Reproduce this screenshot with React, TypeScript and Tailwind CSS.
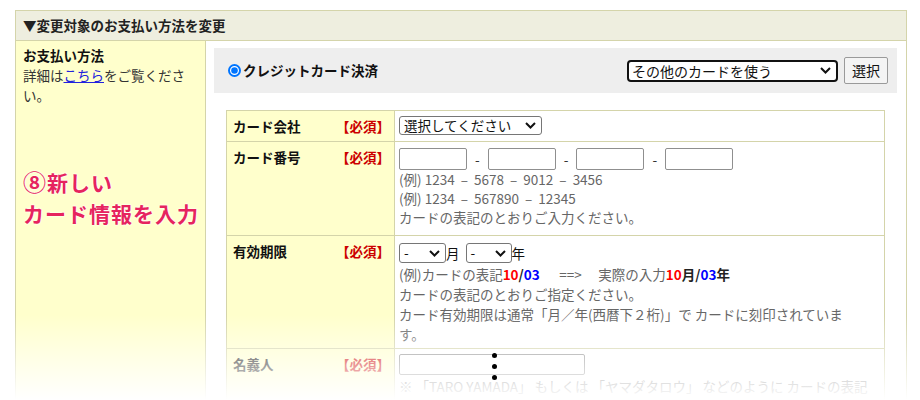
import type { ReactNode } from 'react'

const border = 'border-[#d4d4aa]'

function Chevron() {
  return (
    <svg width="11" height="7" viewBox="0 0 11 7" className="shrink-0">
      <path d="M1 1l4.5 4.5L10 1" fill="none" stroke="#111" strokeWidth="2" />
    </svg>
  )
}

function FakeSelect({ label, className }: { label: string; className: string }) {
  return (
    <div
      className={`flex items-center justify-between border border-[#767676] rounded-[3px] bg-white pl-[4px] pr-[5px] text-[13.5px] text-[#111] ${className}`}
    >
      <span className="leading-none">{label}</span>
      <Chevron />
    </div>
  )
}

function Input({ className }: { className: string }) {
  return <div className={`border border-[#8f8f8f] rounded-[2px] bg-white ${className}`} />
}

function Row({ label, first, children }: { label: string; first?: boolean; children: ReactNode }) {
  return (
    <div className={`flex ${first ? '' : `border-t ${border}`}`}>
      <div className={`w-[168px] shrink-0 bg-[#ffffcc] border-r ${border} pl-[6px] pr-[4px] pt-[5px] flex justify-between leading-[20px] font-bold`}>
        <span className="text-[#111]">{label}</span>
        <span className="text-[#cc0000]">【必須】</span>
      </div>
      <div className="flex-1 bg-white pl-[4px] pr-[4px]">{children}</div>
    </div>
  )
}

const dash = '\u00a0\u00a0–\u00a0\u00a0'

export default function App() {
  return (
    <div className="relative w-[920px] h-[400px] overflow-hidden bg-white font-['Noto_Sans_CJK_JP','Noto_Sans',sans-serif] text-[13.5px] text-[#222]">
      <div className={`ml-[15px] mt-[10px] w-[892px] border ${border}`}>
        {/* 見出し */}
        <div className={`h-[30px] flex items-center pl-[7px] font-bold bg-[#eeeedf] border-b ${border}`}>
          ▼変更対象のお支払い方法を変更
        </div>

        <div className="flex">
          {/* 左列 */}
          <div className={`w-[190px] shrink-0 bg-[#ffffcc] border-r ${border} pl-[7px] pr-[6px] pt-[4px] leading-[20px]`}>
            <div className="font-bold text-[#111]">お支払い方法</div>
            <div className="text-[#333]">
              詳細は<span className="text-[#2222dd] underline">こちら</span>をご覧ください。
            </div>
            <div className="mt-[61px] text-[21px] leading-[31px] tracking-[1px] font-bold text-[#e6245e] [text-shadow:0_0_2px_#fff,0_0_2px_#fff]">
              <span className="text-[23px]">⑧</span>新しい
              <br />
              カード情報を入力
            </div>
          </div>

          {/* 右列 */}
          <div className="flex-1 pl-[8px] pr-[9px] pt-[7px] pb-[30px]">
            <div className="h-[45px] bg-[#eeeeee] flex items-center pl-[14px] pr-[9px]">
              <svg width="13" height="13" viewBox="0 0 13 13" className="shrink-0">
                <circle cx="6.5" cy="6.5" r="5.5" fill="#fff" stroke="#0075ff" strokeWidth="2" />
                <circle cx="6.5" cy="6.5" r="3.3" fill="#0075ff" />
              </svg>
              <span className="ml-[2px] font-bold text-[#111]">クレジットカード決済</span>
              <div className="ml-auto flex items-center justify-between w-[211px] h-[22px] border-2 border-[#111] rounded-[4px] bg-white pl-[3px] pr-[5px] text-[14px] text-[#111]">
                <span className="leading-none">その他のカードを使う</span>
                <Chevron />
              </div>
              <div className="ml-[6px] w-[44px] h-[27px] flex items-center justify-center border border-[#9a9a9a] rounded-[2px] bg-[#f4f4f4] text-[14px] text-[#111]">
                選択
              </div>
            </div>

            <div className={`mt-[17px] mx-[12px] border ${border}`}>
              <Row label="カード会社" first>
                <div className="pt-[5px] pb-[6px]">
                  <FakeSelect label="選択してください" className="w-[143px] h-[19px]" />
                </div>
              </Row>

              <Row label="カード番号">
                <div className="pt-[6px] pb-[8px] text-[#666] leading-[19px]">
                  <div className="flex items-center gap-[8px] text-[#333]">
                    <Input className="w-[68px] h-[22px]" />
                    <span>-</span>
                    <Input className="w-[68px] h-[22px]" />
                    <span>-</span>
                    <Input className="w-[68px] h-[22px]" />
                    <span>-</span>
                    <Input className="w-[68px] h-[22px]" />
                  </div>
                  <div>(例) 1234{dash}5678{dash}9012{dash}3456</div>
                  <div>(例) 1234{dash}567890{dash}12345</div>
                  <div>カードの表記のとおりご入力ください。</div>
                </div>
              </Row>

              <Row label="有効期限">
                <div className="pt-[6px] pb-[4px] text-[#666] leading-[20px]">
                  <div className="flex items-center h-[22px] text-[#111]">
                    <FakeSelect label="-" className="w-[47px] h-[20px]" />
                    <span>月</span>
                    <FakeSelect label="-" className="ml-[6px] w-[46px] h-[20px]" />
                    <span>年</span>
                  </div>
                  <div>
                    (例)カードの表記<b className="text-[#ff0000]">10</b>
                    <b className="text-[#222]">/</b>
                    <b className="text-[#0000ff]">03</b>
                    {'\u00a0\u00a0\u3000==>\u00a0\u3000'}実際の入力<b className="text-[#ff0000]">10</b>
                    <b className="text-[#222]">月/</b>
                    <b className="text-[#0000ff]">03</b>
                    <b className="text-[#222]">年</b>
                  </div>
                  <div>カードの表記のとおりご指定ください。</div>
                  <div>
                    カード有効期限は通常「月／年(西暦下２桁)」で カードに刻印されていま
                    <br />
                    す。
                  </div>
                </div>
              </Row>

              <Row label="名義人">
                <div className="pt-[5px] pb-[6px] text-[#666] leading-[20px]">
                  <Input className="w-[186px] h-[21px]" />
                  <div className="mt-[1px]">
                    ※ 「TARO YAMADA」 もしくは 「ヤマダタロウ」 などのように カードの表記のとおりご入力ください。
                  </div>
                </div>
              </Row>
            </div>
          </div>
        </div>
      </div>

      {/* 下端のフェード */}
      <div className="absolute left-0 right-0 top-[315px] h-[85px] bg-linear-to-b from-white/0 to-white" />

      {/* 続きを示す点 */}
      <div className="absolute left-[492px] top-[353px] flex flex-col gap-[6px]">
        <span className="block w-[5px] h-[5px] rounded-full bg-black" />
        <span className="block w-[5px] h-[5px] rounded-full bg-black" />
        <span className="block w-[5px] h-[5px] rounded-full bg-black" />
      </div>
    </div>
  )
}
